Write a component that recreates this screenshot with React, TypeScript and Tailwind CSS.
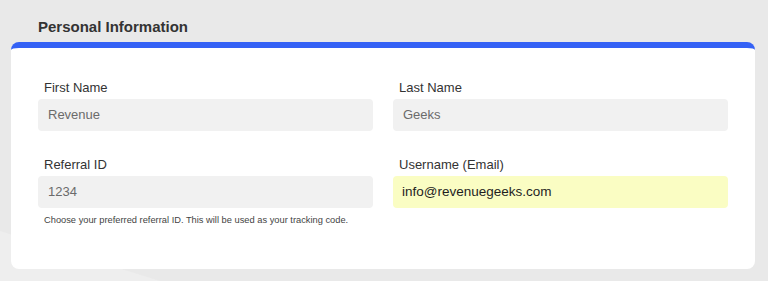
const Field = ({
  label,
  value,
  highlight,
  hint,
}: {
  label: string;
  value: string;
  highlight?: boolean;
  hint?: string;
}) => (
  <div className="flex flex-col">
    <label className="text-[13px] leading-[16px] text-[#333] pl-[6px] mb-[3px]">{label}</label>
    <div
      className={
        highlight
          ? "h-[32px] rounded-[4px] bg-[#fafdc3] px-[9px] flex items-center text-[13.5px] text-[#1f1f1f]"
          : "h-[32px] rounded-[4px] bg-[#f1f1f1] px-[10px] flex items-center text-[13px] text-[#6b6b6b]"
      }
    >
      {value}
    </div>
    {hint && <p className="text-[9.3px] leading-[14px] text-[#444] pl-[6px] mt-[5px]">{hint}</p>}
  </div>
);

const App = () => {
  return (
    <div
      className="w-full h-[281px] overflow-hidden bg-[#e9e9e9] relative"
      style={{ fontFamily: '"Liberation Sans", Arial, sans-serif' }}
    >
      <div className="absolute left-0 bottom-0 w-[160px] h-[50px] bg-[#eeeeee] [clip-path:polygon(0_0,100%_100%,0_100%)]" />
      <div className="relative">
        <h2 className="h-[42px] pl-[38px] pt-[18px] text-[15px] leading-[18px] font-bold text-[#333]">
          Personal Information
        </h2>
        <div className="ml-[11px] mr-[13px] h-[227px] rounded-[8px] border-t-[6px] border-[#3461f5] bg-white px-[27px] pt-[32px]">
          <div className="grid grid-cols-2 gap-x-[20px] gap-y-[26px]">
            <Field label="First Name" value="Revenue" />
            <Field label="Last Name" value="Geeks" />
            <Field
              label="Referral ID"
              value="1234"
              hint="Choose your preferred referral ID. This will be used as your tracking code."
            />
            <div className="self-start">
              <Field label="Username (Email)" value="info@revenuegeeks.com" highlight />
            </div>
          </div>
        </div>
      </div>
    </div>
  );
};

export default App;
